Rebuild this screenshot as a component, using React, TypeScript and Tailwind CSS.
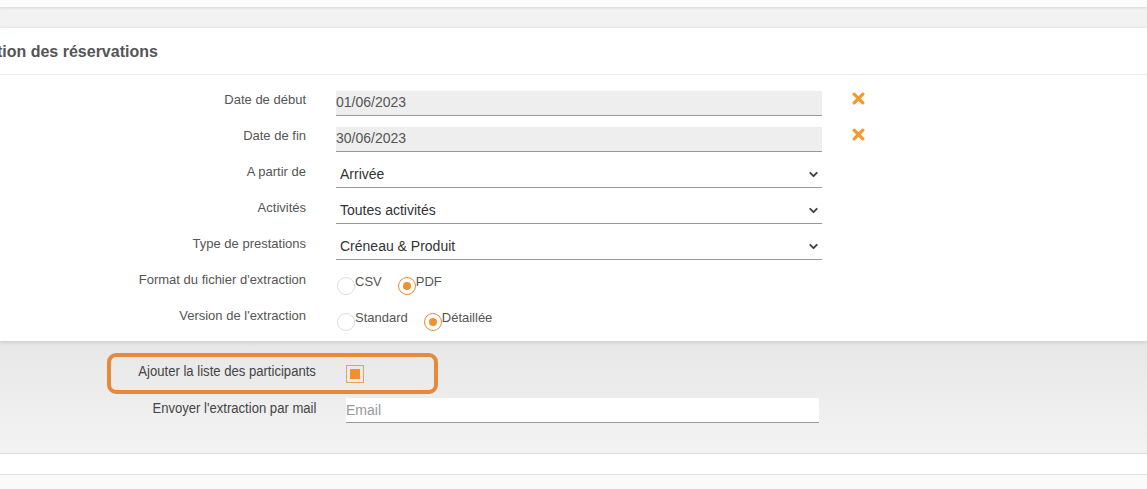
import { ChevronDown } from "lucide-react";

const FONT = { fontFamily: '"Liberation Sans", Arial, sans-serif' };

function Label({ children }: { children: React.ReactNode }) {
  return (
    <div className="w-[306px] shrink-0 text-right text-[13px] leading-[16px] text-[#555] -mt-[6px]">
      {children}
    </div>
  );
}

function ClearIcon() {
  return (
    <svg width="13" height="13" viewBox="0 0 12 12" className="ml-[30px] -mt-[10px]">
      <path d="M2 2 L10 10 M10 2 L2 10" stroke="#f29a2e" strokeWidth="3" strokeLinecap="round" />
    </svg>
  );
}

function DateRow({ label, value }: { label: string; value: string }) {
  return (
    <div className="flex items-center h-[36px]">
      <Label>{label}</Label>
      <div className="ml-[30px] w-[486px] h-[25px] bg-[#eeeeee] border-b border-[#999] flex items-center text-[14px] text-[#555]">
        {value}
      </div>
      <ClearIcon />
    </div>
  );
}

function SelectRow({ label, value }: { label: string; value: string }) {
  return (
    <div className="flex items-center h-[36px]">
      <Label>{label}</Label>
      <div className="ml-[30px] w-[486px] h-[25px] border-b border-[#999] flex items-center justify-between pl-[4px] pr-[2px] text-[14px] text-[#333]">
        <span>{value}</span>
        <ChevronDown size={13} strokeWidth={3.5} className="text-[#444]" />
      </div>
    </div>
  );
}

function Radio({ label, checked }: { label: string; checked?: boolean }) {
  return (
    <div className="flex items-center mr-[16px]">
      <span
        className={`w-[18px] h-[18px] rounded-full border mt-[5px] flex items-center justify-center ${
          checked ? "border-[#e8883a]" : "border-[#ddd]"
        }`}
      >
        {checked && <span className="w-[8px] h-[8px] rounded-full bg-[#f0902f]" />}
      </span>
      <span className="text-[13px] text-[#555] -mt-[3px]">{label}</span>
    </div>
  );
}

function RadioRow({ label, options }: { label: string; options: { l: string; c?: boolean }[] }) {
  return (
    <div className="flex items-center h-[36px]">
      <Label>{label}</Label>
      <div className="ml-[31px] flex items-center">
        {options.map((o) => (
          <Radio key={o.l} label={o.l} checked={o.c} />
        ))}
      </div>
    </div>
  );
}

function Condensed({ children }: { children: React.ReactNode }) {
  return (
    <span className="inline-block text-[14px] text-[#444] origin-right scale-x-[0.935] whitespace-nowrap">
      {children}
    </span>
  );
}

export default function App() {
  return (
    <div className="w-[1147px] h-[489px] overflow-hidden bg-[#fafafa] flex flex-col" style={FONT}>
      <div className="h-[7px] bg-[#fcfcfc] shadow-[0_1px_3px_rgba(0,0,0,0.12)] relative z-10" />
      <div className="h-[21px] bg-[#f2f2f2]" />

      {/* main panel */}
      <div className="bg-white shadow-[0_1px_4px_rgba(0,0,0,0.15)] relative z-10">
        <div className="h-[47px] border-b border-[#ececec] flex items-center">
          <h2 className="-ml-[52px] text-[16px] font-bold text-[#555] mt-[1px]">Extraction des réservations</h2>
        </div>
        <div className="pt-[10px] pb-[4px]">
          <DateRow label="Date de début" value="01/06/2023" />
          <DateRow label="Date de fin" value="30/06/2023" />
          <SelectRow label="A partir de" value="Arrivée" />
          <SelectRow label="Activités" value="Toutes activités" />
          <SelectRow label="Type de prestations" value="Créneau & Produit" />
          <RadioRow label="Format du fichier d'extraction" options={[{ l: "CSV" }, { l: "PDF", c: true }]} />
          <RadioRow label="Version de l'extraction" options={[{ l: "Standard" }, { l: "Détaillée", c: true }]} />
        </div>
      </div>

      {/* options area */}
      <div className="h-[113px] bg-gradient-to-b from-[#e7e7e7] to-[#f3f3f3] border-b border-[#dcdcdc] pt-[12px]">
        <div className="ml-[107px] w-[331px] h-[41px] rounded-[9px] border-[4px] border-[#e8883a] flex items-center">
          <div className="w-[205px] text-right -mt-[6px]">
            <Condensed>Ajouter la liste des participants</Condensed>
          </div>
          <div className="ml-[30px] w-[18px] h-[18px] border border-[#e8a05a] flex items-center justify-center">
            <span className="w-[10px] h-[10px] bg-[#f0902f]" />
          </div>
        </div>
        <div className="flex items-center mt-[4px]">
          <div className="w-[316px] text-right -mt-[6px]">
            <Condensed>Envoyer l'extraction par mail</Condensed>
          </div>
          <div className="ml-[30px] w-[473px] h-[25px] bg-white border-b border-[#999] flex items-center text-[14px] text-[#999]">
            Email
          </div>
        </div>
      </div>
      <div className="h-[21px] bg-white border-b border-[#e2e2e2]" />
      <div className="flex-1 bg-[#fafafa]" />
    </div>
  );
}
